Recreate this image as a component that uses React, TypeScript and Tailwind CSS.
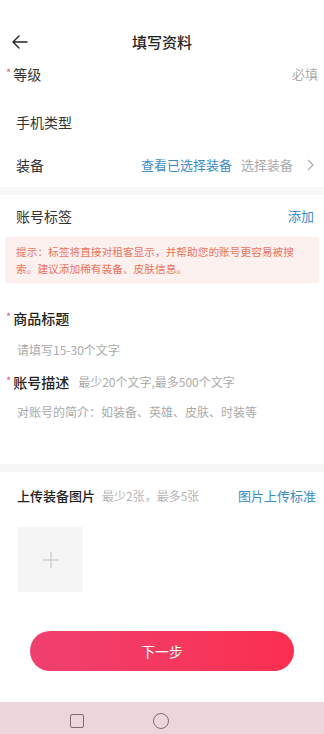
const font = { fontFamily: '"Noto Sans CJK SC", "Noto Sans", sans-serif' }

function Star() {
  return <span className="text-[#d2607a] text-[11px] leading-none mr-[2px] -mt-[4px]">*</span>
}

export default function App() {
  return (
    <div className="w-[324px] h-[734px] bg-white flex flex-col overflow-hidden" style={font}>
      <div className="h-[26px]" />
      {/* header */}
      <div className="h-[32px] relative flex items-center justify-center">
        <svg className="absolute left-[11px] top-[8px]" width="18" height="16" viewBox="0 0 18 16" fill="none" stroke="#222" strokeWidth="1.4" strokeLinecap="round" strokeLinejoin="round">
          <path d="M16 8H2M8 2L2 8l6 6" />
        </svg>
        <span className="text-[15px] font-medium text-[#222]">填写资料</span>
      </div>

      <div className="h-[32px] flex items-center pl-[6px] pr-[6px]">
        <Star />
        <span className="text-[14px] text-[#333]">等级</span>
        <span className="ml-auto text-[13px] text-[#aaa]">必填</span>
      </div>

      <div className="mt-[10px] h-[44px] flex items-center pl-[16px]">
        <span className="text-[14px] text-[#333]">手机类型</span>
      </div>

      <div className="h-[42px] flex items-center pl-[16px] pr-[10px]">
        <span className="text-[14px] text-[#333]">装备</span>
        <span className="ml-auto text-[13px] text-[#3c8cc4]">查看已选择装备</span>
        <span className="ml-[9px] text-[13px] text-[#aaa]">选择装备</span>
        <svg className="ml-[14px]" width="7" height="12" viewBox="0 0 7 12" fill="none" stroke="#aaa" strokeWidth="1.2">
          <path d="M1 1l5 5-5 5" />
        </svg>
      </div>

      <div className="mt-[1px] h-[8px] bg-[#f7f7f7]" />

      <div className="h-[42px] flex items-center pl-[16px] pr-[10px]">
        <span className="text-[14px] text-[#333]">账号标签</span>
        <span className="ml-auto text-[13px] text-[#3c8cc4]">添加</span>
      </div>

      <div className="mx-[5px] h-[46px] bg-[#fdf1ef] pl-[11px] pr-[10px] flex items-center">
        <p className="text-[10.7px] leading-[17px] text-[#e8735f]">
          提示：标签将直接对租客显示，并帮助您的账号更容易被搜
          <br />
          索。建议添加稀有装备、皮肤信息。
        </p>
      </div>

      <div className="mt-[20px] h-[31px] flex items-center pl-[6px]">
        <Star />
        <span className="text-[14px] font-medium text-[#222]">商品标题</span>
      </div>
      <div className="h-[32px] flex items-center pl-[17px]">
        <span className="text-[12px] text-[#aaa]">请填写15-30个文字</span>
      </div>
      <div className="h-[32px] flex items-center pl-[6px]">
        <Star />
        <span className="text-[14px] font-medium text-[#222]">账号描述</span>
        <span className="ml-[9px] text-[12px] text-[#aaa]">最少20个文字,最多500个文字</span>
      </div>
      <div className="h-[28px] flex items-center pl-[17px]">
        <span className="text-[12px] text-[#aaa]">对账号的简介：如装备、英雄、皮肤、时装等</span>
      </div>

      <div className="mt-[38px] h-[8px] bg-[#f7f7f7]" />

      <div className="h-[48px] flex items-center pl-[17px] pr-[8px]">
        <span className="text-[13px] font-medium text-[#222]">上传装备图片</span>
        <span className="ml-[7px] text-[12px] text-[#b5b5b5]">最少2张，最多5张</span>
        <span className="ml-auto text-[13px] text-[#3c8cc4]">图片上传标准</span>
      </div>

      <div className="mt-[7px] ml-[18px] w-[65px] h-[65px] bg-[#f5f5f5] flex items-center justify-center">
        <svg width="16" height="16" viewBox="0 0 16 16" stroke="#d0d0d0" strokeWidth="1.5">
          <path d="M8 0v16M0 8h16" />
        </svg>
      </div>

      <div className="mt-[39px] mx-[30px] h-[40px] rounded-full bg-gradient-to-r from-[#ef4070] to-[#fb2e4f] flex items-center justify-center">
        <span className="text-[14px] text-white">下一步</span>
      </div>

      <div className="mt-[31px] h-[32px] bg-[#ecd6dc] relative">
        <div className="absolute left-[70px] top-[12px] w-[14px] h-[14px] border-[1.5px] border-[#7d6d72] rounded-[2px]" />
        <div className="absolute left-[153px] top-[11px] w-[16px] h-[16px] border-[1.5px] border-[#7d6d72] rounded-full" />
      </div>
    </div>
  )
}
